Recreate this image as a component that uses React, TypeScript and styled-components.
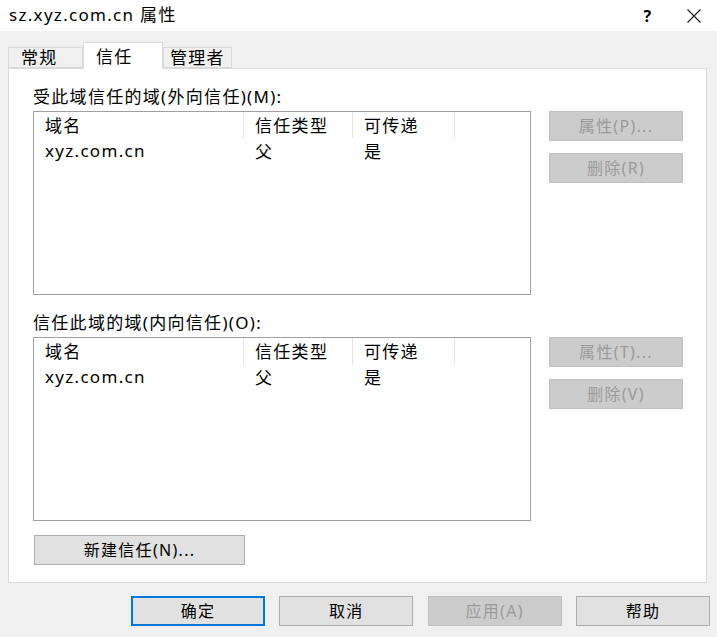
import styled, { createGlobalStyle } from 'styled-components';

const GlobalStyle = createGlobalStyle`
  html, body {
    margin: 0;
    padding: 0;
    background: #f0f0f0;
  }
  * {
    box-sizing: border-box;
  }
`;

const Window = styled.div`
  width: 717px;
  height: 637px;
  background: #f0f0f0;
  display: flex;
  flex-direction: column;
  font-family: 'Noto Sans', 'Noto Sans CJK SC', sans-serif;
  font-size: 17px;
  letter-spacing: 1.3px;
  color: #000;
  overflow: hidden;
`;

const TitleBar = styled.div`
  height: 31px;
  background: #fff;
  display: flex;
  align-items: center;
  padding-left: 9px;
`;

const Title = styled.div`
  flex: 1;
  line-height: 1;
  padding-bottom: 2px;
`;

const TitleButton = styled.div`
  width: 46px;
  height: 31px;
  display: flex;
  align-items: center;
  justify-content: center;
  font-weight: 700;
  font-size: 16px;
`;

const TabRow = styled.div`
  display: flex;
  align-items: flex-end;
  margin: 11px 0 0 8px;
  height: 26px;
  position: relative;
  z-index: 1;
`;

const Tab = styled.div<{ $active?: boolean; $width: number; $pad: number }>`
  width: ${({ $width }) => $width}px;
  height: ${({ $active }) => ($active ? 27 : 21)}px;
  margin-bottom: ${({ $active }) => ($active ? -1 : 0)}px;
  padding-left: ${({ $pad }) => $pad}px;
  background: ${({ $active }) => ($active ? '#fff' : '#f0f0f0')};
  border: 1px solid #d9d9d9;
  border-bottom: ${({ $active }) => ($active ? 'none' : '1px solid #d9d9d9')};
  display: flex;
  align-items: center;
  line-height: 1;
`;

const Panel = styled.div`
  margin: 0 10px 0 8px;
  height: 515px;
  background: #fff;
  border: 1px solid #d9d9d9;
  padding: 17px 0 0 24px;
  display: flex;
  flex-direction: column;
`;

const Label = styled.div<{ $top?: number }>`
  height: 22px;
  line-height: 22px;
  margin-top: ${({ $top }) => $top ?? 0}px;
  margin-bottom: 3px;
`;

const Section = styled.div`
  display: grid;
  grid-template-columns: 498px 134px;
  column-gap: 18px;
  align-items: start;
`;

const ListBox = styled.div`
  height: 184px;
  border: 1px solid #a0a0a0;
  background: #fff;
`;

const ListRow = styled.div<{ $header?: boolean }>`
  display: grid;
  grid-template-columns: 210px 109px 102px;
  height: ${({ $header }) => ($header ? 26 : 24)}px;
  align-items: center;
`;

const Cell = styled.div<{ $header?: boolean }>`
  height: 100%;
  display: flex;
  align-items: center;
  padding: 0 0 ${({ $header }) => ($header ? 2 : 4)}px 11px;
  border-right: ${({ $header }) => ($header ? '1px solid #e5e5e5' : 'none')};
  white-space: nowrap;
`;

const SideButtons = styled.div`
  display: flex;
  flex-direction: column;
  gap: 12px;
`;

const Button = styled.div<{ $disabled?: boolean; $default?: boolean; $width?: number }>`
  width: ${({ $width }) => $width ?? 134}px;
  height: 30px;
  display: flex;
  align-items: center;
  justify-content: center;
  background: ${({ $disabled }) => ($disabled ? '#cccccc' : '#e1e1e1')};
  border: ${({ $disabled, $default }) =>
    $default ? '2px solid #0078d7' : $disabled ? '1px solid #bfbfbf' : '1px solid #adadad'};
  color: ${({ $disabled }) => ($disabled ? '#9a9a9a' : '#000')};
  font-size: 16px;
  line-height: 1;
  padding-bottom: 1px;
`;

const NewTrust = styled.div`
  margin-top: 14px;
  margin-left: 1px;
`;

const Footer = styled.div`
  display: flex;
  justify-content: flex-end;
  gap: 14.33px;
  padding: 13px 7px 0 0;
`;

type Row = { name: string; type: string; transitive: string };

function TrustList({ rows }: { rows: Row[] }) {
  return (
    <ListBox>
      <ListRow $header>
        <Cell $header>域名</Cell>
        <Cell $header>信任类型</Cell>
        <Cell $header>可传递</Cell>
      </ListRow>
      {rows.map((r) => (
        <ListRow key={r.name}>
          <Cell>{r.name}</Cell>
          <Cell>{r.type}</Cell>
          <Cell>{r.transitive}</Cell>
        </ListRow>
      ))}
    </ListBox>
  );
}

const rows: Row[] = [{ name: 'xyz.com.cn', type: '父', transitive: '是' }];

export default function App() {
  return (
    <>
      <GlobalStyle />
      <Window>
        <TitleBar>
          <Title>sz.xyz.com.cn 属性</Title>
          <TitleButton>?</TitleButton>
          <TitleButton>
            <svg width="16" height="16" viewBox="0 0 16 16">
              <path d="M1.5 1.5 L14.5 14.5 M14.5 1.5 L1.5 14.5" stroke="#222" strokeWidth="1.2" />
            </svg>
          </TitleButton>
        </TitleBar>

        <TabRow>
          <Tab $width={75} $pad={12}>常规</Tab>
          <Tab $active $width={80} $pad={12}>信任</Tab>
          <Tab $width={69} $pad={6}>管理者</Tab>
        </TabRow>

        <Panel>
          <Label>受此域信任的域(外向信任)(M):</Label>
          <Section>
            <TrustList rows={rows} />
            <SideButtons>
              <Button $disabled>属性(P)...</Button>
              <Button $disabled>删除(R)</Button>
            </SideButtons>
          </Section>

          <Label $top={17}>信任此域的域(内向信任)(O):</Label>
          <Section>
            <TrustList rows={rows} />
            <SideButtons>
              <Button $disabled>属性(T)...</Button>
              <Button $disabled>删除(V)</Button>
            </SideButtons>
          </Section>

          <NewTrust>
            <Button $width={211}>新建信任(N)...</Button>
          </NewTrust>
        </Panel>

        <Footer>
          <Button $default>确定</Button>
          <Button>取消</Button>
          <Button $disabled>应用(A)</Button>
          <Button>帮助</Button>
        </Footer>
      </Window>
    </>
  );
}
